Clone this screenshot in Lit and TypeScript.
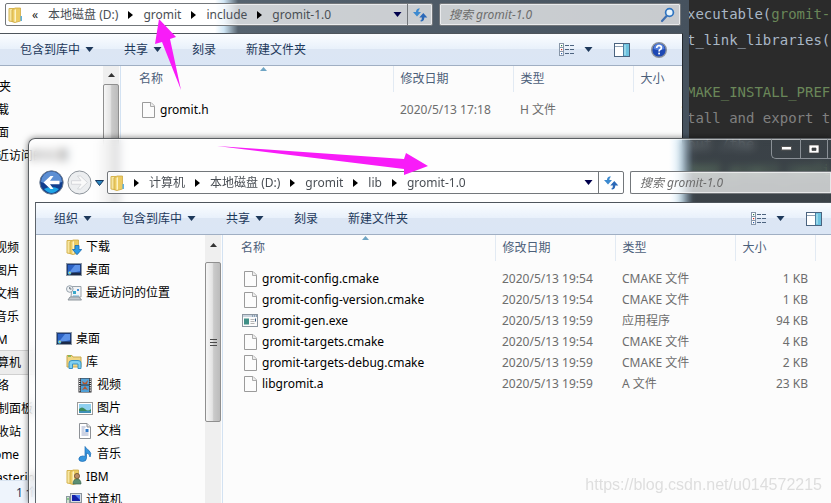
import { LitElement, html, css, svg, nothing, TemplateResult } from "lit";
import { customElement } from "lit/decorators.js";
import { classMap } from "lit/directives/class-map.js";

interface FileRow {
  name: string;
  date: string;
  type: string;
  size: string;
  exe?: boolean;
}

interface NavItem {
  label: string;
  icon?: TemplateResult;
  depth: number;
  selected?: boolean;
  gapAfter?: boolean;
}

const icon16 = (body: unknown) =>
  html`<svg class="i16" viewBox="0 0 16 16" aria-hidden="true">${body}</svg>`;

const screenShape = svg`
  <rect x="0.5" y="1.5" width="15" height="12" fill="#d5dbe2" stroke="#8d98a5"/>
  <rect x="1.500" y="2.5" width="13" height="9" fill="#2c62c4" stroke="#1d3c7c"/>
  <path d="M2 12 L9 3 H14 V9 Z" fill="#5c92e8"/>
  <rect x="1" y="10.500" width="14" height="2.500" fill="#1b2a48"/>
  <circle cx="3.500" cy="11" r="1.800" fill="#4fb6e8"/>
  <circle cx="3.800" cy="10.600" r="0.800" fill="#f2dc4a"/>`;

const folderShape = svg`
  <path d="M1 1.500 H6 L7 2.500 V15 L1 14 Z" fill="#f7e6a0" stroke="#d5b450"/>
  <path d="M4 3 L7 1 H12.500 V14 L7 15.500 L4 14.500 Z" fill="#eccb62" stroke="#cfa943" stroke-width="0.800"/>
  <path d="M6.500 3 L8 2 V14.500 L6.500 15 Z" fill="#fdf3c4"/>`;

const icons = {
  folder: icon16(svg`${folderShape}<path d="M12.500 9 h1.500 v5 h-1.500 z" fill="#5fb1e0"/>`),
  download: icon16(svg`${folderShape}
    <path d="M9 6.500 h4 v4 h2.700 L11 15.700 L6.500 10.500 H9 Z" fill="#2c9be6" stroke="#1768b0" stroke-width="0.800"/>`),
  desktop: icon16(screenShape),
  recent: icon16(svg`
    <path d="M6 1.500 H15 V12 H5 Z" fill="#f2f4f6" stroke="#9aa3ab"/>
    <rect x="7" y="6" width="3" height="3" fill="#38a7c9"/><rect x="11" y="4" width="2" height="2" fill="#4b93d9"/>
    <path d="M7 11 h6" stroke="#6ab1d8"/>
    <path d="M4 12 H13 L15.500 15 H2 Z" fill="#c3c8cd" stroke="#8f979e"/>
    <circle cx="3.800" cy="4" r="3.300" fill="#eef1f4" stroke="#98a3ad"/>
    <path d="M3.800 2 V4 H5.500" fill="none" stroke="#5d6a76"/>`),
  library: icon16(svg`
    <path d="M1 4 V1.500 H6 L7 3 H15 V13 H1 Z" fill="#f0d684" stroke="#c9a94d"/>
    <rect x="2" y="1.500" width="3" height="1.200" fill="#58b455"/>
    <path d="M3 14.500 V9 Q3 6.500 6 6.500 H12 Q15 6.500 15 9 V14.500 H12 V10 H6.500 V14.500 Z" fill="#7fd0f1" stroke="#3a93c4"/>`),
  video: icon16(svg`
    <rect x="1.500" y="1" width="13" height="14.500" fill="#2d2d30"/>
    <rect x="4" y="1.500" width="8" height="6" fill="#58a3d7"/><rect x="4" y="8.500" width="8" height="6.500" fill="#4f9fd6"/>
    <path d="M5 4 L8 6 L11 3 L10 7 H6 Z M5 13 L8 9 L11 13 L8 12 Z" fill="#b8572e"/>
    <path d="M2.700 1.500 V15 M13.300 1.500 V15" stroke="#fff" stroke-width="1.200" stroke-dasharray="1.200 1"/>`),
  picture: icon16(svg`
    <rect x="0.500" y="2.500" width="15" height="12" fill="#fff" stroke="#9a9a9a"/>
    <rect x="2" y="4" width="12" height="9" fill="#8fd0f0"/>
    <path d="M2 9 Q5 6 8 9 T14 9 V11 H2 Z" fill="#3c8b5c"/><path d="M2 11 H14 V13 H2 Z" fill="#3f8fb6"/>`),
  doc: icon16(svg`
    <path d="M2.500 0.500 H10 L13.500 4 V15.500 H2.500 Z" fill="#fff" stroke="#8d9196"/>
    <path d="M10 0.500 V4 H13.500" fill="#e8e8ea" stroke="#8d9196"/>
    <path d="M4.500 4 h4 M4.500 6 h3 M4.500 8 h3 M4.500 10 h7 M4.500 12 h7" stroke="#9aa7c8"/>
    <rect x="8.500" y="6" width="3" height="3" fill="#2f79c9"/>`),
  music: icon16(svg`
    <path d="M8 0.500 Q9.500 3 12 4.500 Q15 7 13 11 Q12.700 7.500 9.500 7 V12 Q9.500 15.500 5.500 15.500 Q2 15.500 1.800 13 Q2 10.300 5.500 10 Q7.300 10 8 10.500 Z" fill="#3796dd" stroke="#1a6cb4" stroke-width="0.700"/>`),
  user: icon16(svg`${folderShape}
    <circle cx="11" cy="7" r="2.600" fill="#b98b62" stroke="#5c4630" stroke-width="0.700"/>
    <path d="M7 15 Q7 10 11 10 Q15 10 15 15 Z" fill="#5b8f73" stroke="#3c6650" stroke-width="0.700"/>`),
  computer: icon16(svg`
    <rect x="0.500" y="4.500" width="3" height="10" fill="#cfe0cf" stroke="#8b9aa0"/>
    <path d="M1 7 h2" stroke="#43b143"/>
    <rect x="4.500" y="1.500" width="11" height="9" fill="#dadfe4" stroke="#8a929b"/>
    <rect x="6" y="3" width="8" height="6" fill="#1420a8"/><path d="M9 3 H14 V8 Z" fill="#4f7df0"/>
    <path d="M7 11 H13 L14 14 H6 Z" fill="#b9c0c6"/>`),
  file: icon16(svg`
    <path d="M2.500 0.500 H11 L14.500 4 V15.500 H2.500 Z" fill="#fcfcfc" stroke="#9b9b9b"/>
    <path d="M10.500 0.500 V4.500 H14.500" fill="#eee" stroke="#ababab"/>`),
  exe: icon16(svg`
    <rect x="0.500" y="1.500" width="15" height="12" fill="#fbfbfb" stroke="#8c96a0"/>
    <rect x="1" y="2" width="14" height="2" fill="#c9d3dd"/>
    <path d="M10 3 h1 M12 3 h1 M14 3 h1" stroke="#4f6b8a"/>
    <rect x="2" y="5.500" width="5" height="6" fill="#3f8f86"/>
    <path d="M8.500 6.500 h4 M8.500 8.500 h4 M8.500 10.500 h4" stroke="#b5b5b5"/><path d="M13.500 5.500 v3" stroke="#3c5f86"/>`),
  view: icon16(svg`
    <rect x="0.500" y="1.500" width="4" height="12" fill="#fff" stroke="#8796a8"/>
    <path d="M0 5.500 h5 M0 9.500 h5" stroke="#8796a8"/>
    <rect x="2" y="3" width="1.200" height="1.200" fill="#2c7a4d"/><rect x="2" y="7" width="1.200" height="1.200" fill="#c8281e"/><rect x="2" y="11" width="1.200" height="1.200" fill="#2a5db0"/>
    <path d="M6 3.500 h4 M11 3.500 h4 M6 7.500 h4 M11 7.500 h4 M6 11.500 h4 M11 11.500 h4" stroke="#4d6480"/>`),
  pane: icon16(svg`
    <rect x="0.500" y="1.500" width="15" height="13" fill="#fff" stroke="#4a637f"/>
    <path d="M1 4.500 H10" stroke="#8fa2b6"/>
    <rect x="10" y="2" width="5" height="12" fill="#6cc2df"/><path d="M9.500 2 V14" stroke="#4a7ea0"/><path d="M11 3 V13" stroke="#bfeaf5"/>`),
  help: icon16(svg`
    <circle cx="8" cy="8" r="7.300" fill="#1d48b4" stroke="#8c929b" stroke-width="1.400"/>
    <path d="M2.500 7 A5.500 5.500 0 0 1 13.500 7 Q8 9 2.500 7 Z" fill="#5580dc"/>
    <path d="M5.700 6 Q5.700 3.700 8 3.700 Q10.400 3.700 10.400 5.700 Q10.400 7 8.800 7.800 Q8.100 8.200 8.100 9.400" fill="none" stroke="#fff" stroke-width="1.700"/>
    <rect x="7.200" y="10.600" width="1.800" height="1.800" fill="#fff"/>`),
  magnifier: icon16(svg`
    <path d="M2 14 L7 8.500" stroke="#3f6fb0" stroke-width="2.200" stroke-linecap="round"/>
    <circle cx="9.500" cy="5.500" r="3.900" fill="#e6f3fc" stroke="#2f74c0" stroke-width="1.700"/>`),
  refresh: icon16(svg`
    <path d="M6.500 1.500 Q4 2 4 5 H1 L5 9.500 L9 5 H6.300 Q6.300 3 8 1.500 Z" fill="#3c8ad0"/>
    <path d="M9.500 14.500 Q12.300 14 12.300 10.500 H15.300 L11.300 6 L7.300 10.500 H10 Q10 13 8 14 Z" fill="#2b69b8"/>`),
};

const caret = html`<svg class="caret" viewBox="0 0 8 5" aria-hidden="true"><path d="M0 0 H8 L4 5 Z" fill="currentColor"/></svg>`;
const crumbArrow = html`<svg class="crumb-arrow" viewBox="0 0 5 8" aria-hidden="true"><path d="M0 0 L5 4 L0 8 Z" fill="#000"/></svg>`;

@customElement("app-root")
export class AppRoot extends LitElement {
  static styles = css`
    :host {
      display: block;
      position: relative;
      height: 100vh;
      overflow: hidden;
      background: #2b2b2b;
      font: 12px/16px "Noto Sans", "Noto Sans CJK SC", sans-serif;
      color: #000;
    }
    * { box-sizing: border-box; }
    button { font: inherit; color: inherit; background: none; border: 0; padding: 0; white-space: nowrap; }
    ul { list-style: none; margin: 0; padding: 0; }
    svg { display: block; flex: none; }
    .i16 { width: 16px; height: 16px; }
    .caret { width: 9px; height: 5px; }
    .crumb-arrow { width: 5px; height: 8px; }

    .editor {
      position: absolute;
      left: 687px;
      top: 1px;
      margin: 0;
      font: 14px/26px "DejaVu Sans Mono", monospace;
      color: #a9b7c6;
      white-space: pre;
    }
    .green { color: #6a8759; }
    .comment { color: #808080; }

    .window { position: absolute; display: flex; flex-direction: column; overflow: hidden; }
    .back {
      left: 0;
      top: 0;
      bottom: 0;
      width: 689px;
      padding-right: 6px;
      background: linear-gradient(90deg, #fff 0, #fff 215px, #cfe6f5 224px, #55626e 238px, #46525e 100%);
    }
    .front {
      left: 28px;
      right: 0;
      top: 138px;
      bottom: 0;
      padding-left: 6px;
      border: 1px solid #5b5f63;
      border-right: 0;
      border-bottom: 0;
      border-radius: 7px 0 0 0;
      background: linear-gradient(90deg, rgba(255, 255, 255, 0.5) 0, rgba(255, 255, 255, 0.5) 640px, rgba(200, 235, 255, 0.5) 652px, rgba(140, 185, 220, 0.16) 664px);
      backdrop-filter: blur(4px);
      box-shadow: 0 0 6px rgba(0, 0, 0, 0.5), inset 1px 1px 0 rgba(255, 255, 255, 0.6);
    }

    .captions {
      align-self: flex-end;
      display: flex;
      height: 20px;
      border: 1px solid #8a9096;
      border-top: 0;
      border-right: 0;
      border-radius: 0 0 0 5px;
    }
    .captions button { width: 27px; display: grid; place-items: center; border-right: 1px solid #8a9096; }
    .captions button:first-child { width: 29px; }
    .captions button:last-child { width: 3px; border: 0; }

    .bar { display: flex; align-items: center; gap: 6px; flex: none; }
    .back .bar { height: 33px; padding: 0 2px 4px 5px; }
    .front .bar { height: 43px; padding-top: 8px; padding-bottom: 4px; }
    .travel { display: flex; align-items: center; gap: 3px; padding-left: 4px; margin-right: -3px; color: #173a66; }
    .travel svg { width: 100%; height: 100%; }
    .travel button { flex: none; width: 25px; height: 25px; }
    .travel .more { width: 9px; height: 6px; }
    .address, .search {
      display: flex;
      align-items: center;
      height: 23px;
      border: 1px solid #73777b;
      border-radius: 2px;
      background: rgba(255, 255, 255, 0.7);
      box-shadow: inset 0 0 0 1px rgba(255, 255, 255, 0.6);
    }
    .address { flex: 1; min-width: 0; color: #4a4f55; padding-left: 2px; }
    .crumbs { display: flex; align-items: center; gap: 10px; flex: 1; }
    .crumbs .i16 { margin-right: -2px; }
    .back .crumbs .chev { color: #222; }
    .drop { width: 20px; height: 100%; display: grid; place-items: center; color: #00004c; }
    .reload { width: 25px; height: 100%; display: grid; place-items: center; border-left: 1px solid #73777b; }
    .search { padding: 0 4px 0 9px; width: 242px; }
    .front .search { width: 201px; border-right: 0; border-radius: 2px 0 0 2px; }
    .search input { flex: 1; min-width: 0; border: 0; padding: 0; background: none; font: inherit; outline: 0; }
    .search input::placeholder { color: #6c6c6c; font-style: italic; opacity: 1; }

    .client { flex: 1; min-height: 0; display: flex; flex-direction: column; border-top: 1px solid #4e555c; background: #fcfcfc; }
    .back .client { border-right: 1px solid #23282e; }
    .front .client { border-left: 1px solid #5d646b; }
    .tools {
      flex: none;
      display: flex;
      align-items: center;
      gap: 30px;
      height: 32px;
      padding-left: 18px;
      color: #1e395b;
      border-bottom: 1px solid #a0afc3;
      background: linear-gradient(#fbfdff 0, #e9f1fb 47%, #dce6f4 50%, #dbe6f5 100%);
    }
    .back .tools { padding-left: 20px; }
    .tools button { display: flex; align-items: center; gap: 5px; }
    .tools .right { margin-left: auto; display: flex; align-items: center; gap: 21px; padding-right: 9px; }
    .back .tools .right { padding-right: 15px; }
    .tools .right button { gap: 9px; }

    .body { flex: 1; min-height: 0; display: flex; }
    .nav { width: 169px; overflow: hidden; }
    .back .nav { width: 103px; }
    .nav li { display: flex; align-items: center; gap: 4px; height: 23px; white-space: nowrap; }
    .nav .gap { margin-bottom: 23px; }
    .back .nav .gap { margin-bottom: 69px; }
    .nav .d0 { padding-left: 20px; }
    .nav .d1 { padding-left: 30px; }
    .nav .d2 { padding-left: 41px; }
    .back .nav ul { margin-left: -25px; padding-top: 9px; }
    .back .nav .d0 { padding-left: 0; }
    .back .nav .d1 { padding-left: 10px; }
    .back .nav .d2 { padding-left: 20px; }
    .nav .selected { background: #ececec; box-shadow: 0 0 0 1px #d0d0d0; }

    .scroll { width: 16px; background: #efefef; display: flex; flex-direction: column; align-items: center; color: #333; }
    .scroll .up { width: 16px; height: 27px; padding-bottom: 7px; display: grid; place-items: center; }
    .back .scroll .up { height: 18px; padding: 0; }
    .thumb {
      width: 16px;
      height: 160px;
      display: grid;
      place-items: center;
      border: 1px solid #8f8f8f;
      border-radius: 2px;
      background: linear-gradient(90deg, #f6f6f6 0, #e4e4e4 45%, #cacaca 55%, #bcbcbc 100%);
    }
    .back .thumb { height: 400px; }
    .splitter { width: 2px; border-right: 1px solid #d3e2f2; }

    .list { position: relative; flex: 1; min-width: 0; overflow: hidden; }
    .sort { position: absolute; left: 139px; top: 1px; width: 7px; height: 4px; }
    table { width: 100%; table-layout: fixed; border-collapse: collapse; color: #6d6d6d; }
    th, td { padding: 0 0 0 7px; text-align: left; font-weight: 400; white-space: nowrap; height: 21px; }
    th { height: 26px; color: #4c607a; border-right: 1px solid #e2eaf3; }
    th:last-child { border: 0; }
    th:first-child { padding-left: 18px; }
    thead::after { content: ""; display: block; height: 7px; }
    .c-name { width: 272px; }
    .c-mid { width: 120px; }
    .c-size { width: 80px; }
    td:first-child { padding-left: 19px; }
    .name { display: flex; align-items: center; gap: 4px; color: #000; }
    .size { text-align: right; padding-right: 7px; }

    .status { flex: none; height: 23px; padding: 4px 16px; background: #eef4fc; border-top: 1px solid #d9e4f1; color: #1e395b; }

    .marks { position: absolute; left: 0; top: 0; width: 431px; height: 180px; pointer-events: none; }
    .watermark {
      position: absolute;
      right: 9px;
      bottom: 8px;
      font: 16px/20px "Liberation Sans", sans-serif;
      color: #dedede;
    }
  `;

  private backNav: NavItem[] = [
    { label: "收藏夹", depth: 0 },
    { label: "下载", depth: 1 },
    { label: "桌面", depth: 1 },
    { label: "最近访问的位置", depth: 1, gapAfter: true },
    { label: "视频", depth: 2 },
    { label: "图片", depth: 2 },
    { label: "文档", depth: 2 },
    { label: "音乐", depth: 2 },
    { label: "IBM", depth: 1 },
    { label: "计算机", depth: 1, selected: true },
    { label: "网络", depth: 1 },
    { label: "控制面板", depth: 1 },
    { label: "回收站", depth: 1 },
    { label: "Home", depth: 1 },
    { label: "Mastering", depth: 1 },
  ];

  private frontNav: NavItem[] = [
    { label: "下载", icon: icons.download, depth: 1 },
    { label: "桌面", icon: icons.desktop, depth: 1 },
    { label: "最近访问的位置", icon: icons.recent, depth: 1, gapAfter: true },
    { label: "桌面", icon: icons.desktop, depth: 0 },
    { label: "库", icon: icons.library, depth: 1 },
    { label: "视频", icon: icons.video, depth: 2 },
    { label: "图片", icon: icons.picture, depth: 2 },
    { label: "文档", icon: icons.doc, depth: 2 },
    { label: "音乐", icon: icons.music, depth: 2 },
    { label: "IBM", icon: icons.user, depth: 1 },
    { label: "计算机", icon: icons.computer, depth: 1 },
  ];

  private backFiles: FileRow[] = [
    { name: "gromit.h", date: "2020/5/13 17:18", type: "H 文件", size: "1 KB" },
  ];

  private frontFiles: FileRow[] = [
    { name: "gromit-config.cmake", date: "2020/5/13 19:54", type: "CMAKE 文件", size: "1 KB" },
    { name: "gromit-config-version.cmake", date: "2020/5/13 19:54", type: "CMAKE 文件", size: "1 KB" },
    { name: "gromit-gen.exe", date: "2020/5/13 19:59", type: "应用程序", size: "94 KB", exe: true },
    { name: "gromit-targets.cmake", date: "2020/5/13 19:54", type: "CMAKE 文件", size: "4 KB" },
    { name: "gromit-targets-debug.cmake", date: "2020/5/13 19:59", type: "CMAKE 文件", size: "2 KB" },
    { name: "libgromit.a", date: "2020/5/13 19:59", type: "A 文件", size: "23 KB" },
  ];

  private address(crumbs: string[], truncated: boolean) {
    return html`
      <div class="address">
        <div class="crumbs">
          ${icons.folder}
          ${truncated ? html`<span class="chev">«</span>` : nothing}
          ${crumbs.map(
            (c, i) => html`${i > 0 || !truncated ? crumbArrow : nothing}<button>${c}</button>`
          )}
        </div>
        <button class="drop" aria-label="历史">${caret}</button>
        <button class="reload" aria-label="刷新">${icons.refresh}</button>
      </div>`;
  }

  private search(withIcon: boolean) {
    return html`
      <label class="search">
        <input type="text" placeholder="搜索 gromit-1.0" aria-label="搜索 gromit-1.0" />
        ${withIcon ? icons.magnifier : nothing}
      </label>`;
  }

  private tools(organize: boolean, help: boolean) {
    return html`
      <div class="tools">
        ${organize ? html`<button>组织 ${caret}</button>` : nothing}
        <button>包含到库中 ${caret}</button>
        <button>共享 ${caret}</button>
        <button>刻录</button>
        <button>新建文件夹</button>
        <div class="right">
          <button aria-label="更改视图">${icons.view}${caret}</button>
          <button aria-label="预览窗格">${icons.pane}</button>
          ${help ? html`<button aria-label="帮助">${icons.help}</button>` : nothing}
        </div>
      </div>`;
  }

  private body(nav: NavItem[], files: FileRow[], grip: boolean) {
    return html`
      <div class="body">
        <nav class="nav">
          <ul>
            ${nav.map(
              (n) => html`<li class=${classMap({
                ["d" + n.depth]: true,
                selected: !!n.selected,
                gap: !!n.gapAfter,
              })}>${n.icon ?? nothing}<span>${n.label}</span></li>`
            )}
          </ul>
        </nav>
        <div class="scroll">
          <div class="up"><svg width="7" height="4" viewBox="0 0 7 4"><path d="M3.500 0 L7 4 H0 Z" fill="#333"/></svg></div>
          <div class="thumb">
            ${grip
              ? html`<svg width="7" height="9" viewBox="0 0 7 9"><path d="M0 1.500 h7 M0 4.500 h7 M0 7.500 h7" stroke="#4a4a4a"/></svg>`
              : nothing}
          </div>
        </div>
        <div class="splitter"></div>
        <div class="list">
          <svg class="sort" viewBox="0 0 7 4"><path d="M3.500 0 L7 4 H0 Z" fill="#6fa5c4"/></svg>
          <table>
            <colgroup><col class="c-name" /><col class="c-mid" /><col class="c-mid" /><col class="c-size" /><col /></colgroup>
            <thead>
              <tr><th>名称</th><th>修改日期</th><th>类型</th><th>大小</th><th></th></tr>
            </thead>
            <tbody>
              ${files.map(
                (f) => html`<tr>
                  <td><span class="name">${f.exe ? icons.exe : icons.file}${f.name}</span></td>
                  <td>${f.date}</td>
                  <td>${f.type}</td>
                  <td class="size">${f.size}</td>
                  <td></td>
                </tr>`
              )}
            </tbody>
          </table>
        </div>
      </div>`;
  }

  render() {
    return html`
      <pre class="editor">xecutable(<span class="green">gromit-</span>
t_link_libraries(

<span class="green">MAKE_INSTALL_PREF</span>
<span class="comment">tall and export t
but /the   .
</span><span class="green">MAKE_gromit_config</span></pre>

      <section class="window back">
        <div class="bar">
          ${this.address(["本地磁盘 (D:)", "gromit", "include", "gromit-1.0"], true)}
          ${this.search(true)}
        </div>
        <div class="client">
          ${this.tools(false, true)}
          ${this.body(this.backNav, this.backFiles, false)}
          <div class="status">1 个对象</div>
        </div>
      </section>

      <section class="window front">
        <div class="captions">
          <button aria-label="最小化"><svg width="11" height="5" viewBox="0 0 11 5"><rect x="0.500" y="0.500" width="10" height="3.500" fill="#fff" stroke="#555"/></svg></button>
          <button aria-label="最大化"><svg width="12" height="10" viewBox="0 0 12 10"><path d="M1 1 H11 V9 H1 Z M4 4 V6.500 H8 V4 Z" fill="#fff" fill-rule="evenodd" stroke="#444" stroke-width="0.700"/></svg></button>
          <button aria-label="关闭"></button>
        </div>
        <div class="bar">
          <div class="travel">
            <button aria-label="后退"><svg viewBox="0 0 25 25">
              <circle cx="12.500" cy="12.500" r="11.700" fill="#123f8e" stroke="#6f7d8e"/>
              <path d="M2 12 A10.500 10.500 0 0 1 23 12 Q12 16 2 12 Z" fill="#5d8fd3"/>
              <path d="M5 19 Q12.500 27 20 19 Q12.500 15 5 19 Z" fill="#1fa5e6"/>
              <path d="M4.500 12.500 L11.500 6 H14.500 L11 10.700 H20.500 V14.300 H11 L14.500 19 H11.500 Z" fill="#fff"/>
            </svg></button>
            <button aria-label="前进"><svg viewBox="0 0 25 25">
              <circle cx="12.500" cy="12.500" r="11.500" fill="#eceef0" stroke="#8d949b"/>
              <path d="M20.500 12.500 L13.500 6 H10.500 L14 10.700 H4.500 V14.300 H14 L10.500 19 H13.500 Z" fill="#fafafa" stroke="#cfd2d5" stroke-width="0.800"/>
            </svg></button>
            <button class="more" aria-label="最近页面"><svg viewBox="0 0 9 6"><path d="M0.500 0.500 H8.500 L4.500 5.500 Z" fill="#2c86c0" stroke="#14375e"/></svg></button>
          </div>
          ${this.address(["计算机", "本地磁盘 (D:)", "gromit", "lib", "gromit-1.0"], false)}
          ${this.search(false)}
        </div>
        <div class="client">
          ${this.tools(true, false)}
          ${this.body(this.frontNav, this.frontFiles, true)}
        </div>
      </section>

      <svg class="marks" viewBox="0 0 431 180" aria-hidden="true">
        <path d="M159 19 L176 37 L170 39 L181 90 L162 42 L155 44 Z" fill="#f81cf8"/>
        <path d="M217 146 L404 159 L406 153 L428 166 L404 175 L404 169 Z" fill="#f81cf8"/>
      </svg>
      <div class="watermark">https://blog.csdn.net/u014572215</div>
    `;
  }
}
